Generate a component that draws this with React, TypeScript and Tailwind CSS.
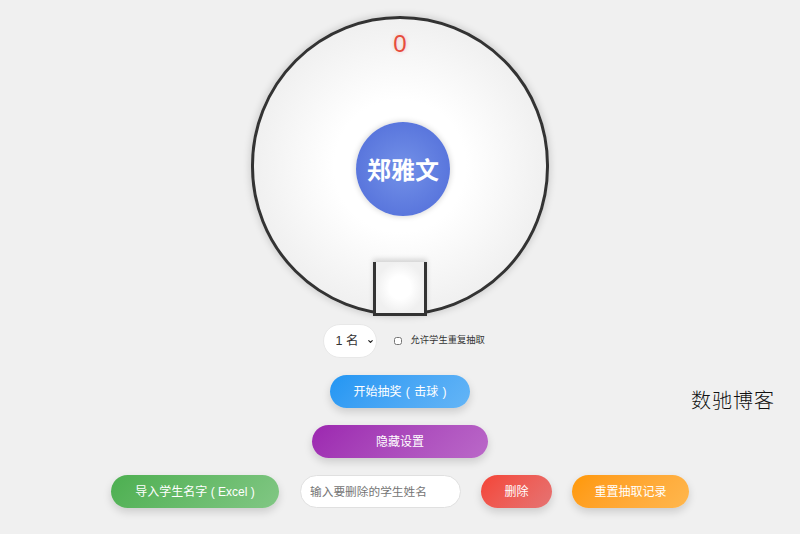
import { ChevronDown } from 'lucide-react';

const font = '[font-family:"Liberation_Sans","Noto_Sans_CJK_SC",sans-serif]';

const App = () => {
  return (
    <div className={`relative flex h-[534px] w-[800px] flex-col items-center overflow-hidden bg-[#f0f0f0] pt-4 text-[#333] ${font}`}>
      {/* Lottery wheel */}
      <div className="relative h-[300px] w-[298px] shrink-0 rounded-full border-[3px] border-[#333] bg-[radial-gradient(closest-side,#ffffff_45%,#f0f0f0_100%)] shadow-[0_0_8px_rgba(0,0,0,0.2)]">
        <div className="absolute left-0 right-0 top-[10px] text-center text-2xl leading-[30px] text-[#e74c3c] [text-shadow:0_0_4px_rgba(231,76,60,0.3)]">
          0
        </div>
        <div className="absolute left-[102px] top-[103px] flex h-[94px] w-[94px] items-center justify-center rounded-full bg-[radial-gradient(circle,#7391e8_0%,#4f6bd8_100%)] pt-[3px] text-2xl font-bold text-white shadow-[0_0_6px_rgba(0,0,0,0.2)]">
          郑雅文
        </div>
        <div className="absolute bottom-[-3px] left-[119px] h-[54px] w-[54px] border-x-[3px] border-b-[3px] border-[#333] bg-[radial-gradient(closest-side,#ffffff_45%,#f0f0f0_100%)] shadow-[0_-3px_5px_rgba(0,0,0,0.15)]" />
      </div>

      {/* Count and repeat option */}
      <div className="ml-2 mt-2 flex h-[34px] w-[163px] shrink-0 items-center">
        <div className="relative h-[34px] w-[54px] shrink-0">
          <select className="h-full w-full appearance-none rounded-[17px] border border-[#e8e8e8] bg-white pl-[12px] text-[12.5px] text-[#333]">
            <option>1 名</option>
          </select>
          <ChevronDown className="absolute right-[3px] top-[14px] h-[7px] w-[7px] text-[#222]" strokeWidth={4} />
        </div>
        <input type="checkbox" className="ml-[17px] h-[8px] w-[8px] shrink-0" />
        <span className="ml-[9px] whitespace-nowrap text-[9.3px] text-[#333]">允许学生重复抽取</span>
      </div>

      <button className="mt-[17px] h-[33px] w-[140px] shrink-0 rounded-[17px] bg-linear-135 from-[#2196f3] to-[#64b5f6] text-xs text-white shadow-[0_4px_8px_rgba(0,0,0,0.15)] [word-spacing:1px]">
        开始抽奖 ( 击球 )
      </button>
      <button className="mt-[17px] h-[33px] w-[176px] shrink-0 rounded-[17px] bg-linear-135 from-[#9c27b0] to-[#ba68c8] text-xs text-white shadow-[0_4px_8px_rgba(0,0,0,0.15)]">
        隐藏设置
      </button>

      {/* Bottom actions */}
      <div className="mt-[17px] flex w-[578px] shrink-0 items-center">
        <button className="h-[33px] w-[168px] rounded-[17px] bg-linear-135 from-[#4caf50] to-[#81c784] text-xs text-white shadow-[0_4px_8px_rgba(0,0,0,0.15)]">
          导入学生名字 ( Excel )
        </button>
        <input
          placeholder="输入要删除的学生姓名"
          className="ml-[21px] h-[33px] w-[161px] rounded-[17px] border border-[#e0e0e0] bg-white px-[9px] text-[11.7px] text-[#333] placeholder:text-[#757575]"
        />
        <button className="ml-[20px] h-[33px] w-[71px] rounded-[17px] bg-linear-135 from-[#f44336] to-[#e57373] text-xs text-white shadow-[0_4px_8px_rgba(0,0,0,0.15)]">
          删除
        </button>
        <button className="ml-[20px] h-[33px] w-[117px] rounded-[17px] bg-linear-135 from-[#ff9800] to-[#ffb74d] text-xs text-white shadow-[0_4px_8px_rgba(0,0,0,0.15)]">
          重置抽取记录
        </button>
      </div>

      {/* Watermark */}
      <div className="absolute left-[691px] top-[388px] whitespace-nowrap text-[20px] font-light leading-[26px] tracking-[1px] text-[#111]">
        数驰博客
      </div>
    </div>
  );
};

export default App;
